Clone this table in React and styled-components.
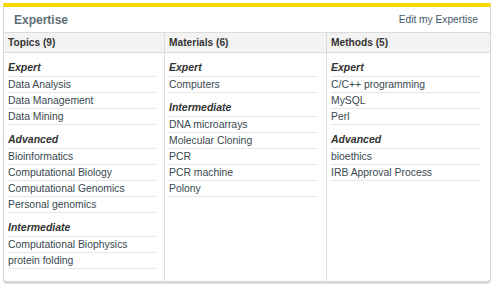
import * as React from 'react';
import styled, { createGlobalStyle } from 'styled-components';

const columns = [
  {
    title: 'Topics (9)',
    groups: [
      { level: 'Expert', items: ['Data Analysis', 'Data Management', 'Data Mining'] },
      { level: 'Advanced', items: ['Bioinformatics', 'Computational Biology', 'Computational Genomics', 'Personal genomics'] },
      { level: 'Intermediate', items: ['Computational Biophysics', 'protein folding'] },
    ],
  },
  {
    title: 'Materials (6)',
    groups: [
      { level: 'Expert', items: ['Computers'] },
      { level: 'Intermediate', items: ['DNA microarrays', 'Molecular Cloning', 'PCR', 'PCR machine', 'Polony'] },
    ],
  },
  {
    title: 'Methods (5)',
    groups: [
      { level: 'Expert', items: ['C/C++ programming', 'MySQL', 'Perl'] },
      { level: 'Advanced', items: ['bioethics', 'IRB Approval Process'] },
    ],
  },
];

const App = () => {
  return <>
    <GlobalStyle />
    <Panel>
      <Header>
        <Title>Expertise</Title>
        <EditLink href="#">Edit my Expertise</EditLink>
      </Header>
      <Columns>
        {columns.map((col, i) => (
          <Column key={col.title} divided={i > 0}>
            <ColHead>{col.title}</ColHead>
            <List>
              {col.groups.map((g) => (
                <React.Fragment key={g.level}>
                  <Level>{g.level}</Level>
                  {g.items.map((item) => <Item key={item}>{item}</Item>)}
                </React.Fragment>
              ))}
            </List>
          </Column>
        ))}
      </Columns>
    </Panel>
  </>;
};

export default App;

const GlobalStyle = createGlobalStyle`
  body {
    margin: 0;
    background: #fff;
    font-family: "Liberation Sans", Arial, sans-serif;
  }
`;

const Panel = styled.div`
  margin: 3px;
  width: 488px;
  box-sizing: border-box;
  border: 1px solid #d6d6d6;
  border-top: 4px solid #f7d800;
  border-radius: 0 0 4px 4px;
  box-shadow: 0 2px 1px rgba(0, 0, 0, 0.14);
  background: #fff;
`;

const Header = styled.div`
  height: 25px;
  display: flex;
  align-items: center;
  justify-content: space-between;
  padding: 0 12px 0 10px;
  border-bottom: 1px solid #dcdcdc;
`;

const Title = styled.h2`
  margin: 0;
  font-size: 12px;
  font-weight: bold;
  color: #5e6e76;
`;

const EditLink = styled.a`
  font-size: 10.2px;
  color: #3f5869;
  text-decoration: none;
`;

const Columns = styled.div`
  display: grid;
  grid-template-columns: 160px 162px 1fr;
`;

const Column = styled.div`
  border-left: ${(p) => (p.divided ? '1px solid #dcdcdc' : 'none')};
  padding-bottom: 12px;
`;

const ColHead = styled.div`
  height: 19px;
  line-height: 19px;
  padding-left: 4px;
  background: #f3f3f3;
  border-bottom: 1px solid #dcdcdc;
  font-size: 10.2px;
  font-weight: bold;
  color: #333;
`;

const List = styled.ul`
  list-style: none;
  margin: 0 0 0 4px;
  padding: 0;
  width: 148px;
`;

const Level = styled.li`
  padding: 6px 0 1px;
  line-height: 16px;
  border-bottom: 1px solid #e6e6e6;
  font-size: 10.5px;
  font-weight: bold;
  font-style: italic;
  color: #333;
`;

const Item = styled.li`
  line-height: 15px;
  border-bottom: 1px solid #e6e6e6;
  font-size: 10.4px;
  color: #3a4950;
`;
